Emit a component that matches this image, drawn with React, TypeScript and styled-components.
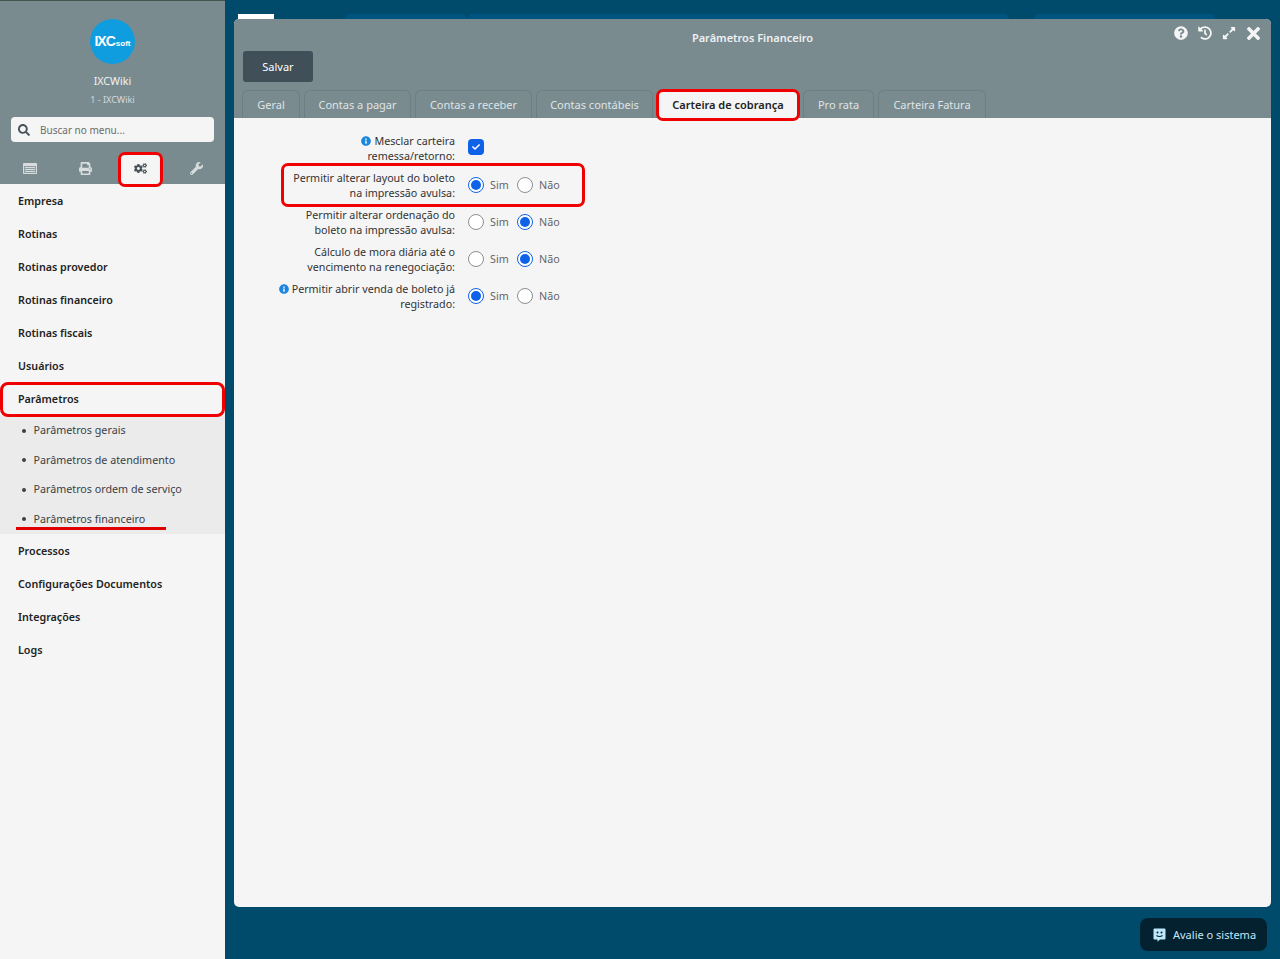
import { FC } from "react";
import styled, { createGlobalStyle } from "styled-components";
import {
  FaCheck,
  FaCogs,
  FaExpandAlt,
  FaHistory,
  FaInfoCircle,
  FaPrint,
  FaQuestionCircle,
  FaSearch,
  FaTimes,
  FaWrench,
} from "react-icons/fa";

const GlobalStyle = createGlobalStyle`
  html, body {
    margin: 0;
    padding: 0;
    height: 959px;
    overflow: hidden;
    background: #004a6b;
    font-family: "Noto Sans", "Open Sans", sans-serif;
    font-size: 10.72px;
  }
  * { box-sizing: border-box; }
`;

// page shell
const Page = styled.div`
  height: 959px;
  display: flex;
  position: relative;
  background: #004a6b;
`;

const Sidebar = styled.aside`
  width: 225px;
  height: 100%;
  flex-shrink: 0;
  background: #f5f5f5;
`;

const SidebarHead = styled.div`
  height: 184px;
  padding-top: 19px;
  display: flex;
  flex-direction: column;
  align-items: center;
  background: #7a8b90;
  border-top: 1px solid #46544f;
`;

const Logo = styled.div`
  width: 45px;
  height: 45px;
  margin-top: -1px;
  border-radius: 50%;
  background: #0f9de0;
  color: #fff;
  display: flex;
  align-items: baseline;
  justify-content: center;
  line-height: 45px;
  font-family: "Liberation Sans", sans-serif;
`;

const LogoStrong = styled.span`
  font-size: 14px;
  font-weight: 700;
  letter-spacing: -1px;
`;

const LogoSoft = styled.span`
  font-size: 8px;
  font-weight: 700;
  margin-left: 1px;
`;

const CompanyName = styled.div`
  margin-top: 10px;
  line-height: 15px;
  color: #f2f2f2;
`;

const CompanyCode = styled.div`
  margin-top: 4px;
  line-height: 14px;
  font-size: 9px;
  color: #d5dadb;
`;

const SearchBox = styled.div`
  width: 203px;
  height: 25px;
  margin-top: 10px;
  padding-left: 7px;
  display: flex;
  align-items: center;
  gap: 10px;
  border-radius: 4px;
  background: #f5f5f5;
  color: #6c6c6c;
  font-size: 10px;
  & svg {
    font-size: 12px;
    color: #48545a;
  }
`;

const IconTabs = styled.div`
  width: 100%;
  margin-top: 10px;
  display: grid;
  grid-template-columns: 60px 50px 60px 53px;
`;

const IconTab = styled.div<{ $active?: boolean }>`
  height: 32px;
  position: relative;
  display: flex;
  align-items: center;
  justify-content: center;
  font-size: 13px;
  color: ${(p) => (p.$active ? "#46545a" : "#d8dcdd")};
`;

const IconMark = styled.span`
  position: absolute;
  top: 0;
  left: 8px;
  width: 45px;
  height: 35px;
  border: 3px solid #f00000;
  border-radius: 7px;
  background: #f5f5f5;
  z-index: 0;
`;

const IconSlot = styled.span`
  position: relative;
  z-index: 1;
  display: flex;
`;

const MenuItem = styled.div`
  height: 33px;
  padding-left: 18px;
  position: relative;
  display: flex;
  align-items: center;
  font-weight: 600;
  color: #222;
`;

const MenuMark = styled.span`
  position: absolute;
  inset: 0 0 -2px 0;
  border: 3px solid #f00000;
  border-radius: 8px;
`;

const SubMenu = styled.div`
  height: 119px;
  padding-top: 0.7px;
  background: #ebebeb;
`;

const SubItem = styled.div`
  height: 29.5px;
  padding-left: 33.5px;
  position: relative;
  display: flex;
  align-items: center;
  color: #3a4145;
  &::before {
    content: "";
    position: absolute;
    left: 22px;
    top: 13px;
    width: 4px;
    height: 4px;
    border-radius: 50%;
    background: #3a4145;
  }
`;

const SubUnderline = styled.span`
  position: absolute;
  left: 16px;
  top: 23px;
  width: 150px;
  height: 3px;
  background: #e00000;
`;

// main area with the floating window
const Main = styled.main`
  flex: 1;
  padding: 14px 9px 0;
  display: flex;
  flex-direction: column;
`;

const TaskStrip = styled.div`
  height: 5px;
  display: flex;
  padding-left: 4px;
`;

const TaskTab = styled.div<{ $w: number; $ml?: number; $white?: boolean }>`
  width: ${(p) => p.$w}px;
  margin-left: ${(p) => p.$ml || 0}px;
  background: ${(p) => (p.$white ? "#fff" : "#005480")};
  border-radius: ${(p) => (p.$white ? "0" : "10px 10px 0 0")};
`;

const Window = styled.section`
  width: 1037px;
  height: 888px;
  display: flex;
  flex-direction: column;
  border-radius: 5px;
  overflow: hidden;
  background: #f5f5f5;
`;

const WindowHead = styled.header`
  height: 99px;
  position: relative;
  background: #7a8b90;
  flex-shrink: 0;
  font-size: 11px;
`;

const WindowTitle = styled.div`
  height: 38px;
  padding-top: 11px;
  text-align: center;
  line-height: 15px;
  font-weight: 600;
  color: #f0f0f0;
`;

const WindowActions = styled.div`
  position: absolute;
  top: 5px;
  right: 6px;
  display: flex;
  align-items: center;
  color: #f5f5f5;
  font-size: 14px;
`;

const ActionSlot = styled.span<{ $size?: number }>`
  width: 24px;
  height: 18px;
  display: flex;
  align-items: center;
  justify-content: center;
  font-size: ${(p) => p.$size || 14}px;
`;

const SaveButton = styled.button`
  display: block;
  width: 70px;
  height: 31px;
  margin: -6px 0 0 9px;
  border: 0;
  border-radius: 3px;
  background: #414f58;
  color: #fff;
  font: inherit;
`;

const TabRow = styled.div`
  margin-top: 8px;
  padding-left: 8px;
  display: flex;
  gap: 4px;
`;

const Tab = styled.div<{ $active?: boolean; $w: number }>`
  width: ${(p) => p.$w}px;
  height: 28px;
  position: relative;
  display: flex;
  align-items: center;
  justify-content: center;
  border: 1px solid #6d7e84;
  border-bottom: 0;
  border-radius: 6px 6px 0 0;
  color: ${(p) => (p.$active ? "#222" : "#dfe4e5")};
  font-weight: ${(p) => (p.$active ? 600 : 400)};
  background: ${(p) => (p.$active ? "#f5f5f5" : "transparent")};
`;

const TabMark = styled.span`
  position: absolute;
  inset: -2px -2px -3px -2px;
  border: 3px solid #f00000;
  border-radius: 7px;
`;

const WindowBody = styled.div`
  flex: 1;
  padding-top: 16px;
  display: flex;
  flex-direction: column;
  gap: 7px;
`;

const FieldRow = styled.div`
  height: 30px;
  position: relative;
  display: flex;
  align-items: center;
  color: #333;
`;

const FieldLabel = styled.div`
  width: 221px;
  line-height: 15px;
  text-align: right;
`;

const InfoIcon = styled.span`
  display: inline-block;
  margin-right: 3px;
  font-size: 10px;
  line-height: 1;
  color: #1a86e0;
  vertical-align: -1px;
`;

const Control = styled.div`
  margin: -2px 0 0 13px;
  display: flex;
  align-items: center;
`;

const Check = styled.span`
  width: 16px;
  height: 16px;
  margin-top: -2px;
  display: flex;
  align-items: center;
  justify-content: center;
  border-radius: 4px;
  background: #0d62e8;
  color: #fff;
  font-size: 8px;
`;

const Radio = styled.span<{ $on?: boolean }>`
  width: 16px;
  height: 16px;
  border-radius: 50%;
  display: flex;
  align-items: center;
  justify-content: center;
  background: #fff;
  border: 1px solid ${(p) => (p.$on ? "#0d62e8" : "#8b8f94")};
  &::after {
    content: "";
    width: 10px;
    height: 10px;
    border-radius: 50%;
    background: ${(p) => (p.$on ? "#0d62e8" : "transparent")};
  }
`;

const RadioText = styled.span`
  width: 33px;
  padding-left: 6px;
  color: #666;
`;

const RowMark = styled.span`
  position: absolute;
  left: 47px;
  top: -8px;
  width: 304px;
  height: 44px;
  border: 3px solid #f00000;
  border-radius: 7px;
  pointer-events: none;
`;

const RateButton = styled.div`
  position: absolute;
  left: 1140px;
  top: 918px;
  width: 127px;
  height: 33px;
  padding-left: 13px;
  display: flex;
  align-items: center;
  gap: 7px;
  border-radius: 8px;
  background: #03212e;
  color: #c4e6f7;
  font-size: 11px;
`;

const FeedbackIcon: FC = () => (
  <svg width="13" height="14" viewBox="0 0 13 14">
    <path d="M1.5 0.5h10a1 1 0 0 1 1 1v9a1 1 0 0 1-1 1H7l-2.500 2.300V11.500H1.500a1 1 0 0 1-1-1v-9a1 1 0 0 1 1-1z" fill="#bfe9fb" />
    <circle cx="4.500" cy="4.500" r="1" fill="#03212e" />
    <circle cx="8.500" cy="4.500" r="1" fill="#03212e" />
    <path d="M3.500 7.500c1.500 1.300 4.500 1.300 6 0" stroke="#03212e" strokeWidth="1.100" fill="none" />
  </svg>
);

const TableIcon: FC = () => (
  <svg width="14" height="11" viewBox="0 0 14 11">
    <rect x="0" y="0" width="14" height="11" rx="1" fill="#d8dcdd" />
    <rect x="1" y="3" width="12" height="7" fill="#8f9ea2" />
    <path d="M2 4.500h10M2 6.500h10M2 8.500h10" stroke="#d8dcdd" strokeWidth="1" />
  </svg>
);

// =============================================================
type Field = {
  lines: [string, string];
  info?: boolean;
  value?: "sim" | "nao";
  marked?: boolean;
};
// =============================================================

const topMenu = ["Empresa", "Rotinas", "Rotinas provedor", "Rotinas financeiro", "Rotinas fiscais", "Usuários"];
const subMenu = ["Parâmetros gerais", "Parâmetros de atendimento", "Parâmetros ordem de serviço", "Parâmetros financeiro"];
const bottomMenu = ["Processos", "Configurações Documentos", "Integrações", "Logs"];

const tabs = [
  { label: "Geral", w: 58 },
  { label: "Contas a pagar", w: 107 },
  { label: "Contas a receber", w: 117 },
  { label: "Contas contábeis", w: 117 },
];
const tabsAfter = [
  { label: "Pro rata", w: 71 },
  { label: "Carteira Fatura", w: 108 },
];

const fields: Field[] = [
  { lines: ["Mesclar carteira", "remessa/retorno:"], info: true },
  { lines: ["Permitir alterar layout do boleto", "na impressão avulsa:"], value: "sim", marked: true },
  { lines: ["Permitir alterar ordenação do", "boleto na impressão avulsa:"], value: "nao" },
  { lines: ["Cálculo de mora diária até o", "vencimento na renegociação:"], value: "nao" },
  { lines: ["Permitir abrir venda de boleto já", "registrado:"], value: "sim", info: true },
];

const App: FC = () => {
  return (
    <Page>
      <GlobalStyle />

      <Sidebar>
        <SidebarHead>
          <Logo>
            <LogoStrong>IXC</LogoStrong>
            <LogoSoft>soft</LogoSoft>
          </Logo>
          <CompanyName>IXCWiki</CompanyName>
          <CompanyCode>1 - IXCWiki</CompanyCode>
          <SearchBox>
            <FaSearch />
            Buscar no menu...
          </SearchBox>
          <IconTabs>
            <IconTab>
              <TableIcon />
            </IconTab>
            <IconTab>
              <FaPrint />
            </IconTab>
            <IconTab $active>
              <IconMark />
              <IconSlot>
                <FaCogs />
              </IconSlot>
            </IconTab>
            <IconTab>
              <FaWrench />
            </IconTab>
          </IconTabs>
        </SidebarHead>

        {topMenu.map((item) => (
          <MenuItem key={item}>{item}</MenuItem>
        ))}
        <MenuItem>
          <MenuMark />
          Parâmetros
        </MenuItem>
        <SubMenu>
          {subMenu.map((item, i) => (
            <SubItem key={item}>
              {item}
              {i === subMenu.length - 1 && <SubUnderline />}
            </SubItem>
          ))}
        </SubMenu>
        {bottomMenu.map((item) => (
          <MenuItem key={item}>{item}</MenuItem>
        ))}
      </Sidebar>

      <Main>
        <TaskStrip>
          <TaskTab $white $w={36} />
          <TaskTab $w={122} $ml={71} />
          <TaskTab $w={542} />
          <TaskTab $w={181} $ml={25} />
        </TaskStrip>

        <Window>
          <WindowHead>
            <WindowTitle>Parâmetros Financeiro</WindowTitle>
            <WindowActions>
              <ActionSlot>
                <FaQuestionCircle />
              </ActionSlot>
              <ActionSlot>
                <FaHistory />
              </ActionSlot>
              <ActionSlot>
                <FaExpandAlt />
              </ActionSlot>
              <ActionSlot $size={19}>
                <FaTimes />
              </ActionSlot>
            </WindowActions>
            <SaveButton>Salvar</SaveButton>
            <TabRow>
              {tabs.map((t) => (
                <Tab key={t.label} $w={t.w}>
                  {t.label}
                </Tab>
              ))}
              <Tab $active $w={142}>
                <TabMark />
                Carteira de cobrança
              </Tab>
              {tabsAfter.map((t) => (
                <Tab key={t.label} $w={t.w}>
                  {t.label}
                </Tab>
              ))}
            </TabRow>
          </WindowHead>

          <WindowBody>
            {fields.map((f) => (
              <FieldRow key={f.lines[0]}>
                {f.marked && <RowMark />}
                <FieldLabel>
                  {f.info && (
                    <InfoIcon>
                      <FaInfoCircle />
                    </InfoIcon>
                  )}
                  {f.lines[0]}
                  <br />
                  {f.lines[1]}
                </FieldLabel>
                <Control>
                  {f.value ? (
                    <>
                      <Radio $on={f.value === "sim"} />
                      <RadioText>Sim</RadioText>
                      <Radio $on={f.value === "nao"} />
                      <RadioText>Não</RadioText>
                    </>
                  ) : (
                    <Check>
                      <FaCheck />
                    </Check>
                  )}
                </Control>
              </FieldRow>
            ))}
          </WindowBody>
        </Window>
      </Main>

      <RateButton>
        <FeedbackIcon />
        Avalie o sistema
      </RateButton>
    </Page>
  );
};

export default App;
